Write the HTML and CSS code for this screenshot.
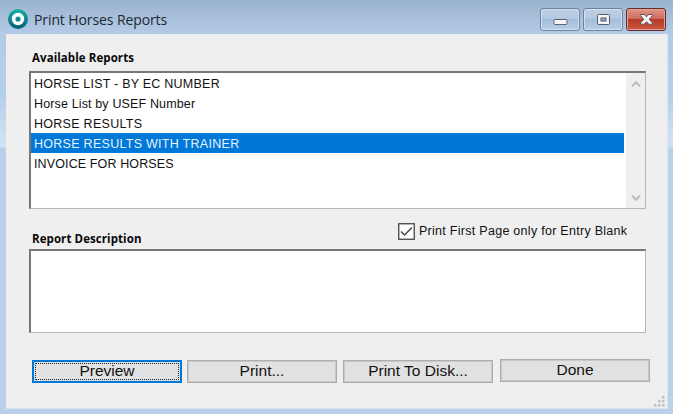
FILE: index.html
```html
<!DOCTYPE html>
<html lang="en">
<head>
<meta charset="utf-8">
<title>Print Horses Reports</title>
<link rel="stylesheet" href="styles.css">
</head>
<body>
<div class="window">
  <header class="titlebar">
    <svg class="app-icon" width="20" height="20" viewBox="0 0 20 20">
      <defs><linearGradient id="teal" x1="0" y1="0" x2="0" y2="1"><stop offset="0" stop-color="#12b5a5"/><stop offset="1" stop-color="#075b78"/></linearGradient></defs>
      <circle cx="10" cy="10" r="10" fill="url(#teal)"/>
      <circle cx="10" cy="10" r="4.4" fill="none" stroke="#fff" stroke-width="3.6"/>
    </svg>
    <h1 class="title"><span>Print Horses Reports</span></h1>
    <div class="controls">
      <button class="ctl" aria-label="Minimize"><svg width="15" height="14" viewBox="0 0 15 14"><rect x="1" y="6.5" width="13" height="5" rx="1" fill="#f5f5f5" stroke="#5b6270"/></svg></button>
      <button class="ctl" aria-label="Maximize"><svg width="15" height="14" viewBox="0 0 15 14"><rect x="1.500" y="1.500" width="12" height="10" rx="1" fill="#f3f3f3" stroke="#555b69"/><rect x="5" y="5" width="5" height="3" fill="#8fb0d5" stroke="#555b69"/></svg></button>
      <button class="ctl close" aria-label="Close"><svg width="15" height="14" viewBox="0 0 15 14"><path d="M1.500 1.500H5.200L7.500 3.800 9.800 1.500h3.700v1L10.200 6.300l3.300 3.700v1.200H9.800L7.500 8.800 5.200 11.200H1.500V10L4.800 6.300 1.500 2.500z" fill="#f7f7f7" stroke="#66505a"/></svg></button>
    </div>
  </header>
  <main class="client">
    <h2 class="label label-reports"><span>Available Reports</span></h2>
    <div class="box list">
      <ul class="items">
        <li class="i1"><span>HORSE LIST - BY EC NUMBER</span></li>
        <li class="i2"><span>Horse List by USEF Number</span></li>
        <li class="i3"><span>HORSE RESULTS</span></li>
        <li class="i4 selected"><span>HORSE RESULTS WITH TRAINER</span></li>
        <li class="i5"><span>INVOICE FOR HORSES</span></li>
      </ul>
      <div class="scrollbar">
        <svg width="10" height="8" viewBox="0 0 10 8"><path d="M1 6.500 5 2.200 9 6.500" fill="none" stroke="#bdbdbd" stroke-width="2"/></svg>
        <svg width="10" height="8" viewBox="0 0 10 8"><path d="M1 1.500 5 5.800 9 1.500" fill="none" stroke="#bdbdbd" stroke-width="2"/></svg>
      </div>
    </div>
    <div class="between">
      <h2 class="label label-desc"><span>Report Description</span></h2>
      <div class="check">
        <svg width="17" height="17" viewBox="0 0 17 17"><rect x=".75" y=".75" width="15.500" height="15.500" fill="#fff" stroke="#444" stroke-width="1.300"/><path d="M3 8.500 6.500 12 14 4.500" fill="none" stroke="#444" stroke-width="1.400"/></svg>
        <span class="check-text">Print First Page only for Entry Blank</span>
      </div>
    </div>
    <div class="box description"></div>
    <div class="actions">
      <button class="btn preview"><span>Preview</span></button>
      <button class="btn print"><span>Print...</span></button>
      <button class="btn disk"><span>Print To Disk...</span></button>
      <button class="btn done"><span>Done</span></button>
    </div>
    <svg class="grip" width="11" height="11" viewBox="0 0 11 11" fill="#bfbfbf"><path d="M8 0h2.500v2.500H8zM4 4h2.500v2.500H4zM8 4h2.500v2.500H8zM0 8h2.500v2.500H0zM4 8h2.500v2.500H4zM8 8h2.500v2.500H8z"/></svg>
  </main>
</div>
</body>
</html>
```
FILE: styles.css
```css
* { box-sizing: border-box; }
body { margin: 0; overflow: hidden; font-family: "Liberation Sans", Arial, sans-serif; color: #111; }
h1, h2, ul { margin: 0; padding: 0; }
button { padding: 0; font-family: inherit; color: inherit; }
span { white-space: nowrap; }
.window {
  width: 673px; height: 414px; padding: 0 5px 5px 6px;
  display: flex; flex-direction: column;
  background: linear-gradient(#9bb4ce 0, #b3cbe6 34px, #b5cee9 95px, #d3e3f3 146px, #b9d1ea 149px, #b9d1ea 100%);
}
.titlebar { height: 34px; flex: none; display: flex; align-items: flex-start; padding: 9px 2px 0 2px; }
.app-icon { flex: none; }
.title { margin-left: 6px; font: 400 14px/20px "Open Sans", sans-serif; letter-spacing: -0.1px; margin-top: 1px; color: #202831; }
.controls { display: flex; gap: 3px; margin-left: auto; margin-top: -1px; }
.ctl {
  width: 40px; height: 23px; display: flex; align-items: center; justify-content: center;
  border: 1px solid #6c839d; border-radius: 3px; box-shadow: inset 0 0 0 1px #d0e0f0;
  background: linear-gradient(#bed1e5 0, #b3c8df 45%, #a3bdd9 50%, #b7cfe8 100%);
}
.close { border-color: #642b2d; box-shadow: inset 0 0 0 1px #e3a298; background: linear-gradient(#dc9589 0, #cd6e5e 45%, #b93a26 50%, #ca5742 100%); }
.client { flex: 1; position: relative; background: #efefef; border: solid #dae5f1; border-width: 0 1px 1px 0; padding: 15px 0 0 23px; }
.label { font: 700 11.5px/18px "Open Sans", sans-serif; letter-spacing: 0.08px; color: #080808; }
.label-reports { height: 22px; padding-left: 3px; }
.box { width: 617px; background: #fff; border: solid; border-color: #777 #b3b6bb #b3b6bb #777; border-width: 2px 1px 1px 2px; }
.list { height: 138px; display: flex; }
.items { list-style: none; width: 593px; font-size: 12.5px; line-height: 22px; }
.items li { height: 20px; padding-left: 3px; }
.i1 { letter-spacing: 0.23px; }
.i2 { letter-spacing: 0.14px; }
.i3 { letter-spacing: 0.28px; }
.i4 { letter-spacing: 0.28px; }
.i5 { letter-spacing: 0.12px; }
.items .selected { background: #0078d7; color: #e6f2ff; }
.scrollbar { width: 19px; margin-left: auto; background: #efefef; display: flex; flex-direction: column; align-items: center; justify-content: space-between; padding: 7px 0 6px; }
.between { height: 40px; display: flex; padding-left: 3px; }
.label-desc { padding-top: 21px; width: 366px; }
.check { display: flex; padding-top: 14px; }
.check-text { margin-left: 4px; font-size: 12.5px; letter-spacing: 0.28px; line-height: 17px; }
.description { height: 84px; }
.actions { display: flex; padding: 27px 0 0 3px; }
.btn { width: 150px; height: 23px; border: 1px solid #adadad; box-shadow: inset 0 0 0 1px #c9c9c9; background: #e1e1e1; font-size: 15.5px; line-height: 20px; }
.btn span { position: relative; top: -1px; }
.preview { border: 2px solid #0078d7; box-shadow: none; outline: 1px dotted #222; outline-offset: -4px; line-height: 18px; }
.print { margin-left: 5px; }
.disk { margin-left: 6px; }
.done { margin: -1px 0 0 7px; }
.grip { position: absolute; right: 2px; bottom: 1px; }
```
